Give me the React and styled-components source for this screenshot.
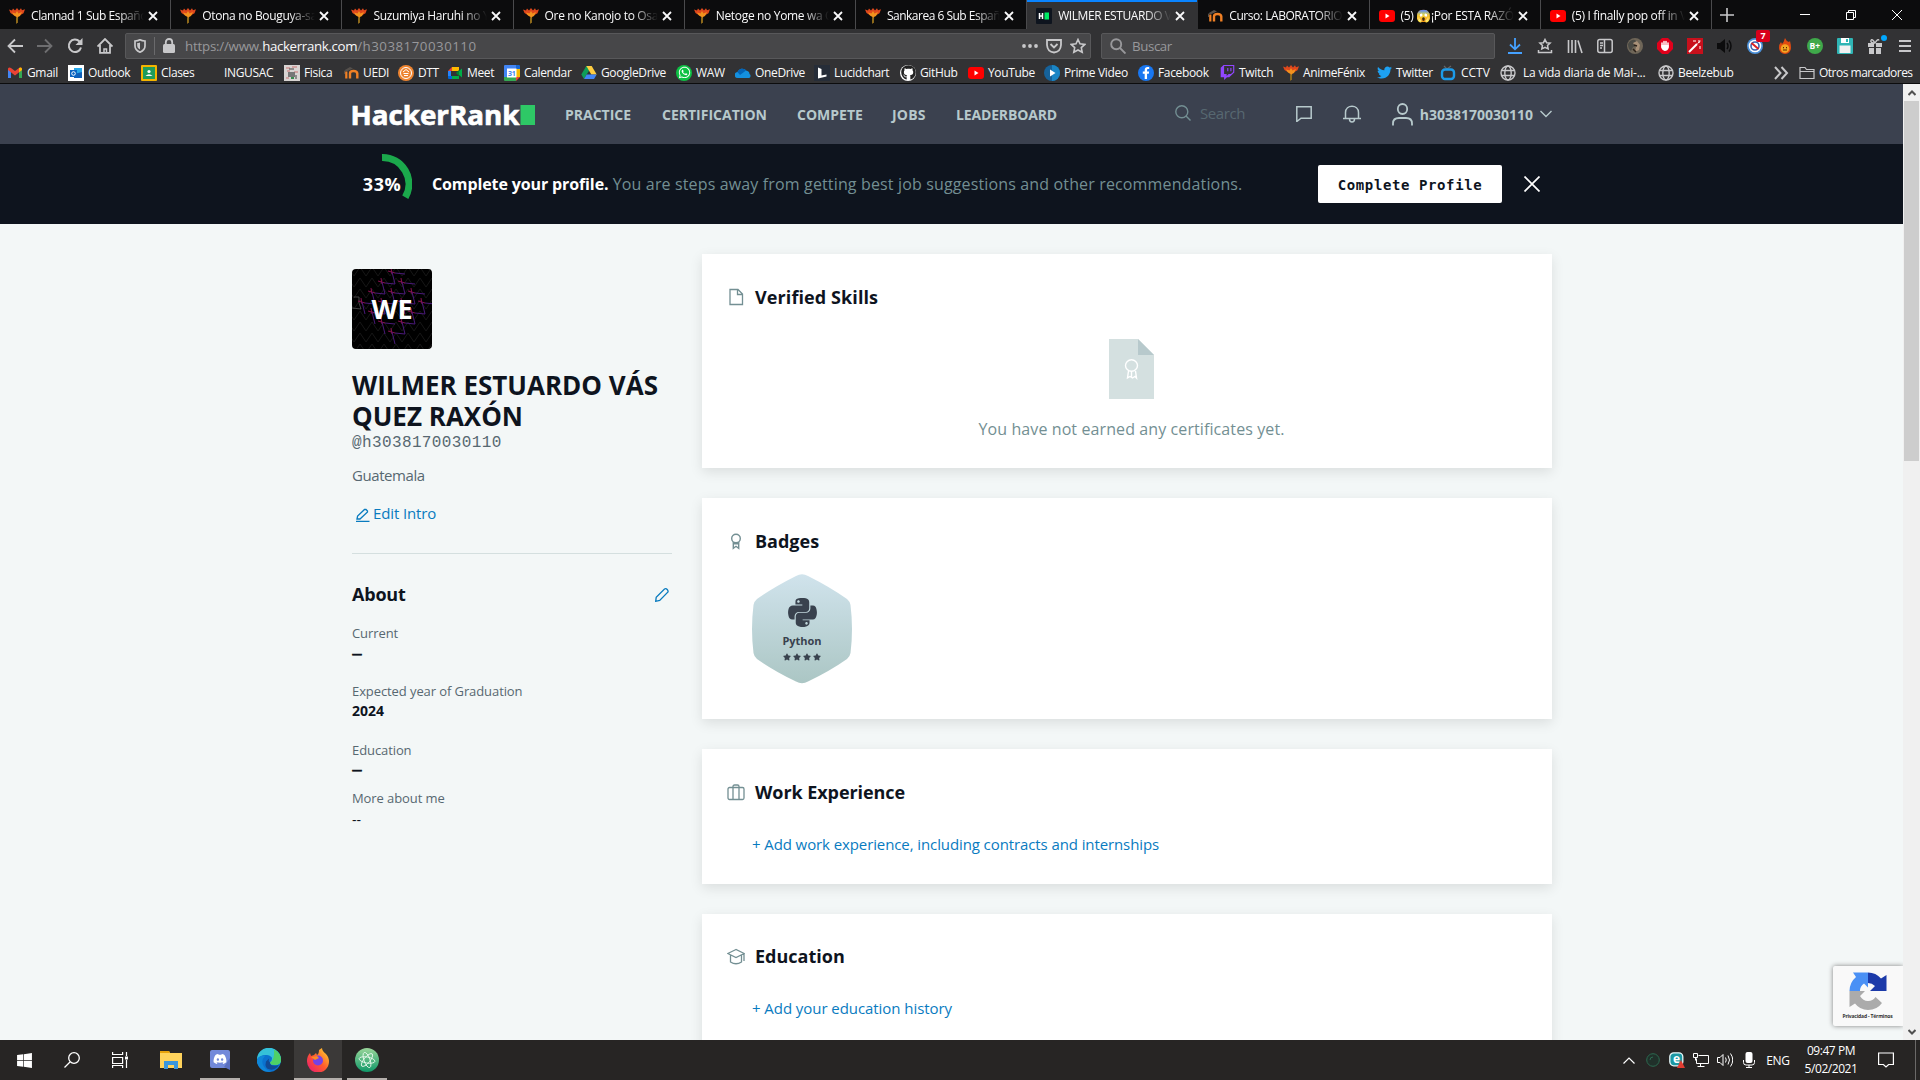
import React from "react";
import styled, { createGlobalStyle, css } from "styled-components";
import {
  FaPython, FaWhatsapp, FaGithub, FaTwitch, FaTwitter, FaFacebookF, FaDiscord, FaWindows, FaStar,
} from "react-icons/fa";

const UI = `"Open Sans", "Noto Sans", sans-serif`;

const Global = createGlobalStyle`
  * { box-sizing: border-box; }
  html, body { margin: 0; padding: 0; overflow: hidden; background: #f3f7f7; }
  body { font-family: ${UI}; }
  h1, h2, p { margin: 0; }
  svg { display: block; flex: none; }
  button, a { font: inherit; text-decoration: none; }
`;

const Screen = styled.div`
  width: 1920px;
  height: 1080px;
  display: flex;
  flex-direction: column;
  overflow: hidden;
`;

/* ---------- browser chrome ---------- */

const TabStrip = styled.div`
  height: 29px;
  flex: none;
  display: flex;
  background: #0c0c0d;
  color: #f9f9fa;
`;

const Tab = styled.div`
  width: 171.2px;
  height: 29px;
  flex: none;
  display: flex;
  align-items: center;
  padding: 2px 12px 0 9px;
  border-right: 1px solid ${(p) => (p.$active ? "transparent" : "#4a4a4c")};
  ${(p) => p.$active && css`
    background: #323234;
    box-shadow: inset 0 2px 0 #0a84ff;
  `}
`;

const TabTitle = styled.div`
  flex: 1;
  margin: 0 4px 0 6px;
  overflow: hidden;
  white-space: nowrap;
  font-size: 12px;
  line-height: 18px;
  letter-spacing: ${(p) => p.$ls ?? -0.33}px;
  mask-image: linear-gradient(to right, #000 calc(100% - 26px), transparent);
`;

const NewTab = styled.div`
  width: 30px;
  display: flex;
  align-items: center;
  justify-content: center;
`;

const WindowButtons = styled.div`
  margin-left: auto;
  display: flex;
  align-items: center;
  width: 138px;
`;

const WindowButton = styled.div`
  width: 46px;
  display: flex;
  justify-content: center;
`;

const Toolbar = styled.div`
  height: 33px;
  flex: none;
  display: flex;
  align-items: center;
  background: #323234;
`;

const NavButton = styled.div`
  width: 30px;
  display: flex;
  justify-content: center;
  opacity: ${(p) => (p.$dim ? 0.4 : 1)};
`;

const Field = styled.div`
  width: ${(p) => p.$w}px;
  height: 26px;
  flex: none;
  display: flex;
  align-items: center;
  gap: 8px;
  background: #474749;
  border: 1px solid #58585a;
  border-radius: 2px;
  padding: 0 4px 0 8px;
  margin-left: ${(p) => p.$ml}px;
`;

const FieldRule = styled.div`
  width: 1px;
  height: 18px;
  background: #6a6a6c;
`;

const Url = styled.div`
  flex: 1;
  margin-left: 2px;
  font-size: 13.3px;
  line-height: 20px;
  color: #98989b;
  letter-spacing: -0.22px;
  white-space: nowrap;
`;

const Host = styled.span`
  color: #f9f9fa;
  letter-spacing: -0.35px;
`;

const UrlPath = styled.span`
  letter-spacing: 0.5px;
`;

const SearchHint = styled.div`
  margin-left: -2px;
  font-size: 13.3px;
  line-height: 20px;
  color: #98989b;
  letter-spacing: -0.4px;
`;

const Extensions = styled.div`
  display: flex;
  align-items: center;
  margin-left: 5px;
`;

const Extension = styled.div`
  width: 30px;
  height: 26px;
  display: flex;
  align-items: center;
  justify-content: center;
  position: relative;
`;

const CountBadge = styled.span`
  position: absolute;
  left: 16px;
  top: -3px;
  width: 14px;
  height: 12px;
  border-radius: 2px;
  background: #d9001b;
  color: #fff;
  font-size: 9px;
  font-weight: 700;
  line-height: 12px;
  text-align: center;
`;

const BlueDot = styled.span`
  position: absolute;
  right: 3px;
  top: 2px;
  width: 6px;
  height: 6px;
  border-radius: 50%;
  background: #00a8ff;
`;

const Bookmarks = styled.div`
  height: 22px;
  flex: none;
  display: flex;
  align-items: center;
  padding-left: 7px;
  background: #323234;
  border-bottom: 1px solid #0c0c0d;
`;

const Bookmark = styled.div`
  width: ${(p) => p.$w}px;
  flex: none;
  display: flex;
  align-items: center;
  gap: ${(p) => p.$gap ?? 4}px;
  color: #f9f9fa;
  font-size: 12px;
  line-height: 16px;
  letter-spacing: ${(p) => p.$ls ?? -0.35}px;
  white-space: nowrap;
`;

const Glyph = styled.span`
  width: 16px;
  height: 16px;
  flex: none;
  display: flex;
  align-items: center;
  justify-content: center;
  border-radius: ${(p) => p.$r || 0};
  background: ${(p) => p.$bg || "transparent"};
  color: ${(p) => p.$c || "#fff"};
`;

/* ---------- site ---------- */

const Viewport = styled.div`
  height: 956px;
  flex: none;
  display: flex;
`;

const Site = styled.div`
  width: 1903px;
  height: 956px;
  position: relative;
  overflow: hidden;
  background: #f3f7f7;
`;

const Scrollbar = styled.div`
  width: 17px;
  background: #f0f0f0;
  display: flex;
  flex-direction: column;
  align-items: center;
  justify-content: space-between;
`;

const ScrollArrow = styled.div`
  height: 17px;
  display: flex;
  align-items: center;
`;

const Thumb = styled.div`
  width: 15px;
  height: 360px;
  background: #cdcdcd;
  margin-bottom: auto;
`;

const SiteHeader = styled.header`
  height: 60px;
  padding: 0 351px 0 352px;
  background: #3b414f;
  display: flex;
  align-items: center;
`;

const Logo = styled.div`
  width: 183px;
  margin-top: 1px;
`;

const NavLinks = styled.nav`
  display: flex;
  gap: 30px;
  margin: 2px 0 0 30px;
`;

const NavLink = styled.a`
  width: ${(p) => p.$w}px;
  color: #b7c9cc;
  font-size: 14px;
  line-height: 20px;
  font-weight: 700;
  letter-spacing: ${(p) => p.$ls || 0}px;
  white-space: nowrap;
`;

const SearchBox = styled.div`
  width: 102px;
  margin-left: 118px;
  display: flex;
  align-items: center;
  gap: 9px;
  color: #576871;
  font-size: 15px;
  line-height: 20px;
  letter-spacing: -0.4px;
  margin-top: -2px;
`;

const HeaderIcons = styled.div`
  display: flex;
  align-items: center;
  gap: 31px;
  margin-left: 19px;
`;

const Account = styled.div`
  display: flex;
  align-items: center;
  gap: 7px;
  color: #b7c9cc;
  font-size: 14px;
  line-height: 20px;
  font-weight: 700;
`;

const AccountName = styled.span`
  margin-top: 2px;
`;

const Banner = styled.section`
  height: 80px;
  padding: 0 351px 0 352px;
  background: #0e141e;
  display: flex;
  align-items: center;
`;

const Progress = styled.div`
  width: 60px;
  height: 60px;
  position: relative;
  display: flex;
  align-items: center;
  justify-content: center;
  color: #fff;
  font-size: 18px;
  font-weight: 700;
  letter-spacing: 0.5px;
`;

const ProgressArc = styled.svg`
  position: absolute;
  left: 0;
  top: 0;
`;

const BannerText = styled.p`
  width: 886px;
  margin-left: 20px;
  font-size: 16px;
  line-height: 24px;
  color: #738f93;
  white-space: nowrap;
  letter-spacing: 0.145px;
`;

const BannerLead = styled.strong`
  color: #fff;
  font-weight: 700;
  letter-spacing: -0.12px;
`;

const CompleteButton = styled.button`
  width: 184px;
  height: 38px;
  border: 0;
  border-radius: 2px;
  padding: 2px 0 0;
  background: #fff;
  color: #0e141e;
  font-family: "DejaVu Sans Mono", monospace;
  font-size: 14px;
  font-weight: 700;
  letter-spacing: 0.6px;
`;

const CloseBanner = styled.div`
  margin-left: 22px;
`;

const Main = styled.main`
  display: flex;
  padding: 30px 351px 0 352px;
`;

const Profile = styled.aside`
  width: 320px;
  margin: 15px 30px 0 0;
  flex: none;
`;

const Avatar = styled.div`
  width: 80px;
  height: 80px;
  border-radius: 4px;
  background: #000;
  position: relative;
  overflow: hidden;
  display: flex;
  align-items: center;
  justify-content: center;
  padding-bottom: 2px;
`;

const Initials = styled.span`
  position: relative;
  color: #fff;
  font-size: 27px;
  font-weight: 700;
`;

const AvatarPattern = styled.svg`
  position: absolute;
  left: 0;
  top: 0;
`;

const Name = styled.h1`
  margin-top: 21px;
  font-size: 26px;
  line-height: 31px;
  font-weight: 700;
  color: #0e141e;
  white-space: nowrap;
`;

const Handle = styled.p`
  margin-top: 1px;
  font-family: "Liberation Mono", monospace;
  font-size: 16px;
  line-height: 20px;
  letter-spacing: 0.38px;
  color: #576871;
`;

const Country = styled.p`
  margin-top: 12px;
  font-size: 15px;
  line-height: 20px;
  letter-spacing: -0.42px;
  color: #576871;
`;

const EditIntro = styled.a`
  display: flex;
  align-items: center;
  gap: 3px;
  margin: 18px 0 0 4px;
  font-size: 15px;
  line-height: 20px;
  letter-spacing: -0.12px;
  color: #097bbf;

  svg { margin-top: 3px; }
`;

const Divider = styled.div`
  height: 1px;
  margin-top: 30px;
  background: #d4dfdf;
`;

const AboutHeading = styled.div`
  display: flex;
  justify-content: space-between;
  align-items: center;
  margin-top: 28px;
  padding-right: 3px;

  svg { margin-top: 2px; }
`;

const AboutTitle = styled.h2`
  font-size: 18px;
  line-height: 24px;
  font-weight: 700;
  color: #0e141e;
  letter-spacing: -0.2px;
`;

const Fact = styled.div`
  margin-top: ${(p) => p.$mt}px;
`;

const FactLabel = styled.p`
  font-size: 13px;
  line-height: 20px;
  color: #576871;
  letter-spacing: -0.09px;
`;

const FactValue = styled.p`
  font-size: 14px;
  line-height: 20px;
  font-weight: ${(p) => (p.$plain ? 400 : 700)};
  color: #0e141e;
  padding-top: ${(p) => p.$pt || 0}px;
`;

const FactBlank = styled.p`
  height: 20px;
  font-size: 10px;
  line-height: ${(p) => p.$lh || 20}px;
  font-weight: 700;
  color: #0e141e;
  -webkit-text-stroke: 0.7px #0e141e;
`;

const Cards = styled.div`
  width: 850px;
  flex: none;
  display: flex;
  flex-direction: column;
  gap: 30px;
`;

const Card = styled.section`
  height: ${(p) => p.$h}px;
  padding: ${(p) => p.$pt || 30}px 25px 0;
  background: #fff;
  box-shadow: 0 4px 12px rgba(0, 0, 0, 0.1);
`;

const CardHeading = styled.div`
  display: flex;
  align-items: center;
  gap: 10px;
`;

const CardTitle = styled.h2`
  font-size: 18px;
  line-height: 26px;
  font-weight: 700;
  color: #0e141e;
  letter-spacing: ${(p) => p.$ls || 0}px;
`;

const Empty = styled.div`
  display: flex;
  flex-direction: column;
  align-items: center;
  gap: 19px;
  margin-top: 29px;
  padding-left: 9px;
  font-size: 16px;
  line-height: 22px;
  letter-spacing: 0.1px;
  color: #738f93;
`;

const AddLink = styled.a`
  display: block;
  margin: 27px 0 0 25px;
  font-size: 15px;
  line-height: 24px;
  color: #097bbf;
  letter-spacing: ${(p) => p.$ls || 0}px;
`;

const Badge = styled.div`
  width: 100px;
  height: 110px;
  margin: 20px 0 0 25px;
  position: relative;
  display: flex;
  flex-direction: column;
  align-items: center;
  padding-top: 22px;
  color: #39424e;
  font-size: 11px;
  line-height: 16px;
  font-weight: 700;
`;

const BadgeShape = styled.svg`
  position: absolute;
  left: 0;
  top: 0;
`;

const BadgeLogo = styled.div`
  position: relative;
  margin-bottom: 4px;
`;

const BadgeName = styled.span`
  position: relative;
`;

const Stars = styled.div`
  position: relative;
  display: flex;
  gap: 2px;
  margin-top: 4px;
`;

const Captcha = styled.div`
  position: absolute;
  right: 0;
  top: 882px;
  width: 70px;
  height: 60px;
  border-radius: 2px 0 0 2px;
  background: #f9f9f9;
  box-shadow: 0 0 5px gray;
  display: flex;
  flex-direction: column;
  align-items: center;
  padding: 6px 1px 0 0;
  gap: 2px;
  font-size: 5px;
  line-height: 8px;
  font-weight: 700;
  letter-spacing: -0.18px;
  color: #333;
`;

/* ---------- taskbar ---------- */

const Taskbar = styled.footer`
  height: 40px;
  flex: none;
  display: flex;
  background: #272524;
  color: #fff;
`;

const TaskButton = styled.div`
  width: ${(p) => p.$w || 48}px;
  height: 40px;
  margin-right: ${(p) => p.$mr || 0}px;
  display: flex;
  align-items: center;
  justify-content: center;
  background: ${(p) => (p.$active ? "#3b3938" : "transparent")};
  box-shadow: ${(p) => (p.$running ? "inset 0 -2px 0 #b4afab" : "none")};
`;

const Tray = styled.div`
  margin-left: auto;
  display: flex;
  align-items: center;
`;

const TrayItem = styled.div`
  width: ${(p) => p.$w}px;
  display: flex;
  justify-content: center;
  font-size: 12px;
  letter-spacing: -0.3px;
`;

const Clock = styled.div`
  width: 72px;
  text-align: center;
  font-size: 12px;
  line-height: 18px;
  letter-spacing: -0.45px;
  white-space: nowrap;
`;

const ShowDesktop = styled.div`
  width: 5px;
  height: 40px;
  border-left: 1px solid #6b6968;
`;

/* ---------- drawings ---------- */

const Svg = ({ s = 16, w, h, vb = "0 0 16 16", children, ...r }) => (
  <svg width={w || s} height={h || s} viewBox={vb} fill="none" {...r}>{children}</svg>
);

const Phoenix = () => (
  <Svg>
    <path d="M0 1.500l3 1L4 .500l2 2L8 0l2 2.500L12 .300l1 2 3-1-1.500 4-3.500 2H5L1.500 5z" fill="#e0481c" />
    <path d="M3 4.500l3.500 1L8 3l1.500 2.500L13 4l-2 4-2 1-.5 6H7L7.500 9 5 7.500z" fill="#f2921e" />
    <path d="M7.200 9.500h2L8.800 14.500 7 16z" fill="#8a6a1c" />
  </Svg>
);
const Moodle = () => (
  <Svg>
    <path d="M1 5.500L7 2l3 1.500-6 2.700z" fill="#55504c" />
    <path d="M1.500 6v3" stroke="#55504c" />
    <path d="M3.300 13.500V6.500" stroke="#f08025" strokeWidth="2.200" />
    <path d="M7 13.500V8.500q0-2.500 3.500-2.500t3.800 2.500v5" stroke="#f08025" strokeWidth="2.400" />
  </Svg>
);
const YouTube = () => (
  <Svg><rect y="2" width="16" height="12" rx="3" fill="#f00" /><path d="M6.500 5.500v5l4-2.500z" fill="#fff" /></Svg>
);
const HrFav = () => (
  <Svg><rect width="16" height="16" rx="1" fill="#0e141e" /><path d="M3.500 5v6M6.500 5v6M3.500 8h3" stroke="#fff" strokeWidth="1.500" /><path d="M8.500 4.500H13v7H8.500z" fill="#00ea64" /></Svg>
);
const TabClose = () => (
  <Svg s={10} vb="0 0 10 10"><path d="M1 1l8 8M9 1l-8 8" stroke="#f9f9fa" strokeWidth="1.800" /></Svg>
);
const Globe = () => (
  <Svg stroke="#c8c8ca" strokeWidth="1.400"><circle cx="8" cy="8" r="7" /><ellipse cx="8" cy="8" rx="3.200" ry="7" /><path d="M1.500 5.500h13M1.500 10.500h13" /></Svg>
);
const Gmail = () => (
  <Svg><path d="M1 13V4l3 2v7z" fill="#4285f4" /><path d="M12 13V6l3-2v9z" fill="#34a853" /><path d="M1 3.500Q2 2 4 3l4 3 4-3q2-1 3 .5V5l-7 5.500L1 5z" fill="#ea4335" /><path d="M12 3q2-1 3 .5V5l-3 2.300z" fill="#fbbc04" /></Svg>
);
const Outlook = () => (
  <Svg><rect width="16" height="16" fill="#fff" /><path d="M6 3h8v9H6z" fill="#28a8ea" /><path d="M6 9l8-2v6H6z" fill="#0f5fb8" /><rect x="2" y="5" width="7" height="7" fill="#0a64c2" /><circle cx="5.500" cy="8.500" r="1.800" stroke="#fff" /></Svg>
);
const Classroom = () => (
  <Svg><rect width="16" height="16" rx="1" fill="#f4b400" /><rect x="2" y="2" width="12" height="12" fill="#1e9c5c" /><circle cx="8" cy="6.500" r="1.600" fill="#fff" /><path d="M4.500 11q3.500-3.500 7 0z" fill="#fff" /></Svg>
);
const Fisica = () => (
  <Svg><rect width="16" height="16" fill="#d8d4d2" /><path d="M2 3h4M8 2h5M3 6h3M10 7h4M2 13h3" stroke="#c97070" /><path d="M4 7h7v5H4z" fill="#777" /><path d="M5 4h5M12 10v4" stroke="#444" /><path d="M7 13h3" stroke="#3a8a50" strokeWidth="2" /></Svg>
);
const Dtt = () => (
  <Svg><circle cx="8" cy="8" r="8" fill="#ee8430" /><circle cx="8" cy="8" r="5.500" stroke="#fff" /><path d="M5 7l3-2.500L11 7M5.500 8.500h5M6 10.500h4" stroke="#fff" /></Svg>
);
const Meet = () => (
  <Svg><path d="M1 6l4-4v4z" fill="#ea4335" /><path d="M1 6h3v6H1z" fill="#2684fc" /><path d="M5 2h7v4H5z" fill="#ffba00" /><path d="M1 11h4v3H2q-1 0-1-1z" fill="#0066da" /><path d="M5 11h7v3H5zM12 6l3-2.500v9L12 10z" fill="#00ac47" /><path d="M9 8l3-3v6z" fill="#00832d" /></Svg>
);
const CalendarIcon = () => (
  <Svg><path d="M0 1q0-1 1-1h11v4H0z" fill="#4285f4" /><path d="M12 0h3q1 0 1 1v3h-4z" fill="#1967d2" /><path d="M0 4h4v8H0z" fill="#4285f4" /><path d="M12 4h4v8h-4z" fill="#fbbc04" /><path d="M0 12h12v4H1q-1 0-1-1z" fill="#34a853" /><path d="M12 12h4l-4 4z" fill="#ea4335" /><path d="M3 3.500h9.500v9H3z" fill="#fff" /><text x="7.800" y="10.700" fontSize="7" fontWeight="700" textAnchor="middle" fill="#4285f4" letterSpacing="-.3">31</text></Svg>
);
const Drive = () => (
  <Svg><path d="M5.300 1h5.400L8 5.700 3 14 .3 9.500z" fill="#0f9d58" /><path d="M5.300 1h5.400l5 8.500h-5.400z" fill="#ffcd40" /><path d="M3 14l2.700-4.500h10L13 14z" fill="#4285f4" /></Svg>
);
const OneDriveIcon = () => (
  <Svg><path d="M3 13a3 3 0 0 1-.5-6A5 5 0 0 1 11 5.500q3.500.5 3.500 3.500a2.200 2.200 0 0 1-.5 4z" fill="#1490df" /><path d="M2.500 7A5 5 0 0 1 11 5.500L5 10z" fill="#0364b8" /></Svg>
);
const Lucid = () => (
  <Svg><rect width="16" height="16" fill="#262d38" /><path d="M4 2.500L7.500 4v6.500l5-1v2L4 13.500z" fill="#fff" /></Svg>
);
const Prime = () => (
  <Svg><circle cx="8" cy="8" r="8" fill="#16629a" /><path d="M8 0a8 8 0 0 1 0 16z" fill="#1a85c5" /><path d="M6 4.500v7L11.500 8z" fill="#fff" /></Svg>
);
const Cctv = () => (
  <Svg stroke="#1c9be8" strokeWidth="2.400"><path d="M4 1l3 3 4-3" strokeWidth="1.200" stroke="#666" /><rect x="2" y="4.500" width="12" height="9.500" rx="3" /></Svg>
);
const Folder = () => (
  <Svg stroke="#c8c8ca" strokeWidth="1.200"><path d="M1 13.500v-11h5l1.500 2H15v9zM1 6.500h14" /></Svg>
);

const RibbonPath = () => (
  <><circle cx="8" cy="5.500" r="4.300" /><path d="M5.300 9v6.300L8 13.300l2.700 2V9M5.300 10.800h5.400" /></>
);

const Hexagon = () => (
  <BadgeShape width="100" height="110" viewBox="0 0 100 110">
    <defs><linearGradient id="hex" x1="0" y1="0" x2="0" y2="1"><stop offset="0" stopColor="#d0e3ec" /><stop offset="1" stopColor="#abc6c4" /></linearGradient></defs>
    <path d="M44 2Q50-1.500 56 2Q78 13 95 25Q98 27.500 98.500 31Q101.500 55 98.500 79Q98 82.500 95 85Q78 97 56 107.500Q50 111 44 107.500Q22 97 5 85Q2 82.500 1.500 79Q-1.500 55 1.500 31Q2 27.500 5 25Q22 13 44 2Z" fill="url(#hex)" />
  </BadgeShape>
);

const crosses = [[40, 3], [30, 13], [50, 13], [20, 23], [40, 23], [60, 23], [10, 33], [30, 33], [50, 33], [70, 33], [20, 43], [60, 43], [30, 53], [50, 53], [40, 63]];

const Pattern = () => (
  <AvatarPattern width="80" height="80" viewBox="0 0 80 80" fill="none">
    {Array.from({ length: 8 }, (_, r) => (
      <path key={r} d={"M-4 " + (r * 11 - 2) + " l6 9 6-9".repeat(7)} stroke="#171717" />
    ))}
    <path d="M2 28h5v6l2 6-9-1" stroke="#555" strokeWidth=".8" />
    {crosses.map(([x, y], i) => (
      <g key={i}>
        <path d={`M${x - 4} ${y - 1}l7 2M${x - 1} ${y - 4}l1 6`} stroke="#8a1050" />
        <path d={`M${x} ${y}l3 12M${x + 3} ${y + 1}l10 1`} stroke="#4a1a7a" />
      </g>
    ))}
  </AvatarPattern>
);

/* ---------- data ---------- */

const tabs = [
  ["Clannad 1 Sub Español", Phoenix, -0.42],
  ["Otona no Bouguya-san", Phoenix],
  ["Suzumiya Haruhi no Yuu", Phoenix],
  ["Ore no Kanojo to Osana", Phoenix],
  ["Netoge no Yome wa Onna", Phoenix],
  ["Sankarea 6 Sub Español", Phoenix, -0.5],
  ["WILMER ESTUARDO VÁS", HrFav, -0.42],
  ["Curso: LABORATORIO D", Moodle, -0.45],
  ["(5) 😱¡Por ESTA RAZÓN", YouTube],
  ["(5) I finally pop off in Va", YouTube],
];

const bookmarks = [
  ["Gmail", 61, <Gmail />],
  ["Outlook", 73, <Outlook />],
  ["Clases", 63, <Classroom />],
  ["INGUSAC", 80, null],
  ["Fisica", 59, <Fisica />],
  ["UEDI", 55, <Moodle />],
  ["DTT", 49, <Dtt />],
  ["Meet", 57, <Meet />],
  ["Calendar", 77, <CalendarIcon />],
  ["GoogleDrive", 95, <Drive />],
  ["WAW", 59, <Glyph $bg="#0cc143" $r="50%"><FaWhatsapp size={13} /></Glyph>],
  ["OneDrive", 79, <OneDriveIcon />],
  ["Lucidchart", 86, <Lucid />],
  ["GitHub", 68, <Glyph $bg="#fff" $r="50%" $c="#222"><FaGithub size={15} /></Glyph>],
  ["YouTube", 76, <YouTube />],
  ["Prime Video", 94, <Prime />],
  ["Facebook", 81, <Glyph $bg="#1877f2" $r="50%"><FaFacebookF size={12} /></Glyph>],
  ["Twitch", 64, <Glyph $c="#9146ff"><FaTwitch size={15} /></Glyph>],
  ["AnimeFénix", 93, <Phoenix />],
  ["Twitter", 64, <Glyph $c="#1da1f2"><FaTwitter size={15} /></Glyph>],
  ["CCTV", 60, <Cctv />, 5, 0],
  ["La vida diaria de Mai-...", 158, <Globe />, 7, -0.22],
  ["Beelzebub", 115, <Globe />],
];

const g = "#c8c8ca";

const Pencil = ({ line }) => (
  <Svg s={14} vb="0 0 14 14" stroke="#097bbf" strokeWidth="1.300">
    {line
      ? <><path d="M1 11l.6-3L8.500 1.500h1.500l1.500 1.500v1L4 11z" /><path d="M0 13.400h13.500" /></>
      : <path d="M.7 13.300l.5-4L9.500 1q1.500-.8 2.700.5T13 4L4.700 12.500z" />}
  </Svg>
);

export default function App() {
  return (
    <Screen>
      <Global />
      <TabStrip>
        {tabs.map(([t, Icon, ls], i) => (
          <Tab key={t} $active={i === 6}><Icon /><TabTitle $ls={ls}>{t}</TabTitle><TabClose /></Tab>
        ))}
        <NewTab><Svg s={14} vb="0 0 14 14"><path d="M7 0v14M0 7h14" stroke={g} strokeWidth="1.600" /></Svg></NewTab>
        <WindowButtons>
          <WindowButton><Svg s={10} vb="0 0 10 10"><path d="M0 4.500h10" stroke="#fff" /></Svg></WindowButton>
          <WindowButton><Svg s={10} vb="0 0 10 10" stroke="#fff"><path d="M.5 2.500h7v7h-7zM2.500 2.500v-2h7v7h-2" /></Svg></WindowButton>
          <WindowButton><Svg s={10} vb="0 0 10 10"><path d="M0 0l10 10M10 0L0 10" stroke="#fff" /></Svg></WindowButton>
        </WindowButtons>
      </TabStrip>

      <Toolbar>
        <NavButton><Svg stroke={g} strokeWidth="1.800"><path d="M8 1.500L1.500 8 8 14.500M1.500 8H16" /></Svg></NavButton>
        <NavButton $dim><Svg stroke={g} strokeWidth="1.800"><path d="M8 1.500L14.500 8 8 14.500M14.500 8H0" /></Svg></NavButton>
        <NavButton><Svg><path d="M14 9.500a6.200 6.200 0 1 1-1.500-6" stroke={g} strokeWidth="2" /><path d="M15.500 0v7h-7z" fill={g} /></Svg></NavButton>
        <NavButton><Svg stroke={g} strokeWidth="1.800"><path d="M.5 8.500L8 1l7.500 7.500M3 7v7.800h10V7" /><path d="M7 15v-4h2.500v4" strokeWidth="1.500" /></Svg></NavButton>
        <Field $w={966} $ml={5}>
          <Svg w={12} h={14} vb="0 0 12 14"><path d="M1 2q3 0 5-1.200Q8 2 11 2v5q0 4-5 6.200Q1 11 1 7z" stroke={g} strokeWidth="1.700" /><path d="M6 3.500Q4.500 4 3.200 4v3q0 2.200 2.800 3.500z" fill={g} /></Svg>
          <FieldRule />
          <Svg w={12} h={15} vb="0 0 12 15"><rect y="6" width="12" height="9" rx="1.500" fill={g} /><path d="M2.800 7V4.200a3.200 3.200 0 0 1 6.400 0V7" stroke={g} strokeWidth="1.800" /></Svg>
          <Url>https://www.<Host>hackerrank.com</Host><UrlPath>/h3038170030110</UrlPath></Url>
          <Svg><g fill={g}><circle cx="2" cy="8" r="1.900" /><circle cx="8" cy="8" r="1.900" /><circle cx="14" cy="8" r="1.900" /></g></Svg>
          <Svg stroke={g} strokeWidth="1.800"><path d="M1 2h14v5q-.5 7-7 7.500Q1.500 14 1 7z" /><path d="M4.500 6L8 9.500 11.500 6" /></Svg>
          <Svg stroke={g} strokeWidth="1.600"><path d="M8 1.500l2 4.300 4.800.6-3.500 3.200.9 4.700L8 12l-4.200 2.300.9-4.700L1.200 6.400 6 5.800z" /></Svg>
        </Field>
        <Field $w={394} $ml={10}>
          <Svg stroke="#98989b" strokeWidth="1.900"><circle cx="6.200" cy="6.200" r="5" /><path d="M10 10l5.500 5.500" /></Svg>
          <SearchHint>Buscar</SearchHint>
        </Field>
        <Extensions>
          <Extension><Svg stroke="#45a1ff" strokeWidth="1.800"><path d="M8 0v11M3 6.500L8 11.300l5-4.800M1 15h14" /></Svg></Extension>
          <Extension><Svg stroke={g} strokeWidth="1.500"><path d="M8 1.500l1.600 3.200 3.500.4-2.600 2.400.7 3.400L8 9.300l-3.200 1.600.7-3.400L2.900 5.100l3.500-.4zM1.500 12v2.500h13V12" /></Svg></Extension>
          <Extension><Svg stroke={g} strokeWidth="1.600"><path d="M1.500 2v13M5 2v13M8.500 2v13M11 2.500L15 15" /></Svg></Extension>
          <Extension><Svg stroke={g} strokeWidth="1.500"><rect x=".8" y="1.500" width="14.400" height="13" rx="2" /><path d="M7.500 2v12M3 5h3M3 7.500h3M3 10h2" /></Svg></Extension>
          <Extension><Svg><circle cx="8" cy="8" r="8" fill="#6f6658" /><path d="M1 6q3-5 7-4l3 3-2 3-3 1-2 4q-3-2-3-7z" fill="#4a4a45" /><path d="M6 5l4-2 3 4-1 5-4 2 1-5z" fill="#a89078" /><path d="M7 7l3 1M6 11l3 3" stroke="#2a2018" strokeWidth="1.500" /></Svg></Extension>
          <Extension><Svg><path d="M5 0h6l5 5v6l-5 5H5l-5-5V5z" fill="#e0001b" /><path d="M5 9V5M7 8V3.500M9 8V3.500M11 9V5" stroke="#fff" strokeWidth="1.500" strokeLinecap="round" /><path d="M4.300 7h7.400v3q-1 3-4 3-2 0-3.400-3z" fill="#fff" /></Svg></Extension>
          <Extension><Svg><rect width="16" height="16" fill="#c8101c" /><path d="M2 14L10 6" stroke="#fff" strokeWidth="2" /><path d="M6 3h3M12 2v3M13 8v3M10.500 5.500l3-2.500" stroke="#fff" /></Svg></Extension>
          <Extension><Svg><path d="M0 5h3l5-4v14l-5-4H0z" fill="#0c0c0d" /><path d="M10 5q2 3 0 6M12 2.500q4 5.500 0 11" stroke="#0c0c0d" strokeWidth="1.500" /></Svg></Extension>
          <Extension><Svg><circle cx="8" cy="8" r="8" fill="#4a90d9" /><circle cx="8" cy="8" r="6.300" fill="#fff" /><circle cx="8" cy="8" r="4" stroke="#3b62b0" strokeWidth="1.600" /><path d="M4.500 5l7 6" stroke="#d22" strokeWidth="2" /></Svg><CountBadge>7</CountBadge></Extension>
          <Extension><Svg><path d="M8 0q1 3 4 4l1-1q1 4 1 7a6 6 0 0 1-12 0Q2 6 4 4l1 2q2-2 3-6z" fill="#e04a10" /><circle cx="8" cy="10.500" r="4.300" fill="#f5a623" /><path d="M6.500 9v1.300M9.500 9v1.300M6 12h4" stroke="#5a2a00" /></Svg></Extension>
          <Extension><Svg><circle cx="8" cy="8" r="8" fill="#3fa94a" /><text x="7.800" y="11" fontSize="8.500" fontWeight="700" textAnchor="middle" fill="#fff">B+</text></Svg></Extension>
          <Extension><Svg><rect width="16" height="16" rx="1" fill="#2fb5b5" /><path d="M4 0h8v5H4z" fill="#fff" /><path d="M9 1h2v3H9z" fill="#2fb5b5" /><path d="M2.500 7.500h11V15h-11z" fill="#f1f1f1" /></Svg></Extension>
          <Extension><Svg fill={g}><path d="M1 5h6v4H1zM9 5h6v4H9zM2 10h5v6H2zM9 10h5v6H9z" /><path d="M8 5Q3 5 4 2.500T8 5q3-5 4-2.500" stroke={g} strokeWidth="1.400" fill="none" /></Svg><BlueDot /></Extension>
          <Extension><Svg stroke={g} strokeWidth="1.800"><path d="M2 3h12M2 8h12M2 13h12" /></Svg></Extension>
        </Extensions>
      </Toolbar>

      <Bookmarks>
        {bookmarks.map(([t, w, icon, gap, ls]) => (
          <Bookmark key={t} $w={w} $gap={gap} $ls={ls}>{icon || <Glyph />}<span>{t}</span></Bookmark>
        ))}
        <Bookmark $w={26}><Svg stroke={g} strokeWidth="2"><path d="M2 2l5.500 6L2 14M8.500 2L14 8l-5.500 6" /></Svg></Bookmark>
        <Bookmark $w={115} $gap={4} $ls={-0.5}><Folder /><span>Otros marcadores</span></Bookmark>
      </Bookmarks>

      <Viewport>
        <Site>
          <SiteHeader>
            <Logo>
              <svg width="183" height="30" viewBox="0 0 183 30">
                <text x="-1.500" y="25" fontSize="27.500" fontWeight="700" fill="#fff" stroke="#fff" strokeWidth=".7" textLength="169" lengthAdjust="spacingAndGlyphs">HackerRank</text>
                <path d="M168.500 5H183v20h-14.500z" fill="#2ec866" />
              </svg>
            </Logo>
            <NavLinks>
              <NavLink $w={67}>PRACTICE</NavLink>
              <NavLink $w={105}>CERTIFICATION</NavLink>
              <NavLink $w={65}>COMPETE</NavLink>
              <NavLink $w={34} $ls={0.2}>JOBS</NavLink>
              <NavLink $w={101} $ls={-0.15}>LEADERBOARD</NavLink>
            </NavLinks>
            <SearchBox>
              <Svg stroke="#738f93" strokeWidth="1.400"><circle cx="6.800" cy="6.800" r="6" /><path d="M11 11l4.500 4.500" /></Svg>
              <span>Search</span>
            </SearchBox>
            <HeaderIcons>
              <Svg stroke="#b7c9cc" strokeWidth="1.500"><path d="M.8.800h14.400v11.400H5L.8 15.500z" /></Svg>
              <Svg s={18} vb="0 0 18 18" stroke="#b7c9cc" strokeWidth="1.500"><path d="M0 13.500h18M2.500 13.500V7.500C2.500-1 15.500-1 15.500 7.500v6M6.500 14q0 3 2.500 3t2.500-3" /></Svg>
              <Account>
                <Svg w={21} h={23} vb="0 0 21 23" stroke="#b7c9cc" strokeWidth="1.800"><ellipse cx="10.500" cy="6" rx="4.700" ry="5" /><path d="M1 22.500v-2Q1 15 7 15h7q6 0 6 5.500v2" /></Svg>
                <AccountName>h3038170030110</AccountName>
                <Svg w={12} h={8} vb="0 0 12 8" stroke="#b7c9cc" strokeWidth="1.400"><path d="M.5 1L6 6.500 11.500 1" /></Svg>
              </Account>
            </HeaderIcons>
          </SiteHeader>

          <Banner>
            <Progress>
              <ProgressArc width="60" height="60" viewBox="0 0 60 60"><path d="M30 3.500A26.500 26.500 0 0 1 53.300 43.300" fill="none" stroke="#1ba94c" strokeWidth="7" /></ProgressArc>
              33%
            </Progress>
            <BannerText><BannerLead>Complete your profile.</BannerLead> You are steps away from getting best job suggestions and other recommendations.</BannerText>
            <CompleteButton>Complete Profile</CompleteButton>
            <CloseBanner><Svg stroke="#fff" strokeWidth="1.700"><path d="M.5.500l15 15M15.500.500l-15 15" /></Svg></CloseBanner>
          </Banner>

          <Main>
            <Profile>
              <Avatar><Pattern /><Initials>WE</Initials></Avatar>
              <Name>WILMER ESTUARDO VÁS<br />QUEZ RAXÓN</Name>
              <Handle>@h3038170030110</Handle>
              <Country>Guatemala</Country>
              <EditIntro><Pencil line />Edit Intro</EditIntro>
              <Divider />
              <AboutHeading><AboutTitle>About</AboutTitle><Pencil /></AboutHeading>
              <Fact $mt={17}><FactLabel>Current</FactLabel><FactBlank>—</FactBlank></Fact>
              <Fact $mt={18}><FactLabel>Expected year of Graduation</FactLabel><FactValue>2024</FactValue></Fact>
              <Fact $mt={19}><FactLabel>Education</FactLabel><FactBlank $lh={18}>—</FactBlank></Fact>
              <Fact $mt={8}><FactLabel>More about me</FactLabel><FactValue $plain $pt={2}>--</FactValue></Fact>
            </Profile>

            <Cards>
              <Card $h={214}>
                <CardHeading>
                  <Svg w={18} h={18} vb="0 0 18 18" stroke="#738f93" strokeWidth="1.300"><path d="M3 1.500h8l4.500 4.500v10.500h-12.500zM10.500 1.500v5h5" /></Svg>
                  <CardTitle $ls={0.1}>Verified Skills</CardTitle>
                </CardHeading>
                <Empty>
                  <svg width="46" height="60" viewBox="0 0 46 60" fill="none">
                    <path d="M0 0h29l16 16v44H0z" fill="#d4e0e0" /><path d="M29 0l16 16H29z" fill="#b7c9cc" />
                    <g stroke="#fff" strokeWidth="1.400"><ellipse cx="22.500" cy="26.500" rx="6" ry="5.800" /><path d="M19.500 32l-1 7 2.500-1.500 2.500 1.500 2.500-1.500 1.500 1.500-1-7M22.500 32v6" /></g>
                  </svg>
                  <span>You have not earned any certificates yet.</span>
                </Empty>
              </Card>
              <Card $h={221}>
                <CardHeading>
                  <Svg s={18} vb="-1 -1 18 18" stroke="#738f93" strokeWidth="1.400"><RibbonPath /></Svg>
                  <CardTitle>Badges</CardTitle>
                </CardHeading>
                <Badge>
                  <Hexagon />
                  <BadgeLogo><FaPython size={33} /></BadgeLogo>
                  <BadgeName>Python</BadgeName>
                  <Stars><FaStar size={8} /><FaStar size={8} /><FaStar size={8} /><FaStar size={8} /></Stars>
                </Badge>
              </Card>
              <Card $h={135}>
                <CardHeading>
                  <Svg s={18} vb="0 0 18 18" stroke="#738f93" strokeWidth="1.300"><rect x="1" y="4.500" width="16" height="12" rx="1.500" /><path d="M6 16.500v-13q0-1.500 1.500-1.500h3q1.500 0 1.500 1.500v13" /></Svg>
                  <CardTitle $ls={-0.07}>Work Experience</CardTitle>
                </CardHeading>
                <AddLink $ls={-0.1}>+ Add work experience, including contracts and internships</AddLink>
              </Card>
              <Card $h={170} $pt={29}>
                <CardHeading>
                  <Svg s={18} vb="0 0 18 18" stroke="#738f93" strokeWidth="1.300"><path d="M9 2.500L.8 6.500 9 10.500l8.200-4zM3.500 8v7q5.500 3.500 11 0V8M17 7v7" /></Svg>
                  <CardTitle>Education</CardTitle>
                </CardHeading>
                <AddLink $ls={-0.06}>+ Add your education history</AddLink>
              </Card>
            </Cards>
          </Main>

          <Captcha>
            <svg width="38" height="38" viewBox="0 0 38 38" fill="none">
              <path d="M.5 19A18.500 18.500 0 0 1 7 5L4 .5h15v15l-4-4Q11 14 11 19z" fill="#4a90f5" />
              <path d="M19 .5q8 0 13 6l5.500-3.500V19H21l5-5q-3-3-7-3z" fill="#1c3aa9" />
              <path d="M.5 19H16l-5 5q3 5 8 5 5 0 7.500-4L33 31q-5 7-14 7-8 0-13-6.500L.5 35z" fill="#ababab" />
            </svg>
            <span>Privacidad - Términos</span>
          </Captcha>
        </Site>
        <Scrollbar>
          <ScrollArrow><Svg s={8} vb="0 0 8 8" stroke="#505050" strokeWidth="2"><path d="M.5 6L4 2.500 7.500 6" /></Svg></ScrollArrow>
          <Thumb />
          <ScrollArrow><Svg s={8} vb="0 0 8 8" stroke="#505050" strokeWidth="2"><path d="M.5 2L4 5.500 7.500 2" /></Svg></ScrollArrow>
        </Scrollbar>
      </Viewport>

      <Taskbar>
        <TaskButton><FaWindows size={17} /></TaskButton>
        <TaskButton><Svg stroke="#fff" strokeWidth="1.300"><circle cx="10" cy="6" r="5.300" /><path d="M6 10l-5.500 5.500" /></Svg></TaskButton>
        <TaskButton><Svg stroke="#fff" strokeWidth="1.200"><path d="M.6 5.500h10v6H.6zM.6 0v2.500h10V0M.6 16v-2.500h10V16M14.500 0v4M14.500 8v8" /><path d="M13 4.500h3v3h-3z" fill="#fff" stroke="none" /></Svg></TaskButton>
        <TaskButton $w={54} $mr={2}>
          <Svg w={22} h={18} vb="0 0 22 18"><path d="M0 0h9l1 2h12v15H0z" fill="#ffd35c" /><path d="M0 0h9l1 2H0z" fill="#e8a30c" /><path d="M4 18v-8h14v8h-4v-4H8v4z" fill="#3a96dd" /></Svg>
        </TaskButton>
        <TaskButton $w={40} $running $mr={5}><Svg s={20} vb="0 0 20 20"><rect width="20" height="18" rx="2" fill="#7289da" /><path d="M14 17l6 3V8z" fill="#5a6fc0" /><g color="#fff" transform="translate(3 2)"><FaDiscord size={14} /></g></Svg></TaskButton>
        <TaskButton $mr={1}>
          <Svg s={24} vb="0 0 24 24">
            <circle cx="12" cy="12" r="12" fill="#0b72cf" />
            <path d="M0 11.500A12 12 0 0 1 24 12q0 5-6 5-5 0-5-2.500 2-1.500 2-4T10 7Q3 6.500 0 11.500z" fill="#35c1d8" />
            <path d="M17 1.500A12 12 0 0 1 24 12q0 5-6 5-5 0-5-2.500 5-3 4-13z" fill="#4fd165" />
            <path d="M0 12q2-5 8-4-4 4-2 9t8 6.500Q4 25 0 15z" fill="#0f86d8" />
            <path d="M13 14.500q0 4 7 3l2-1q-3 6-9 5t-4-8l3-3q-1 2 1 4z" fill="#124a94" />
          </Svg>
        </TaskButton>
        <TaskButton $active $running $mr={5}>
          <Svg s={24} vb="0 0 24 24">
            <defs><linearGradient id="fx" x1="0" y1="1" x2="1" y2="0"><stop offset="0" stopColor="#e6137a" /><stop offset=".5" stopColor="#ff5a2c" /><stop offset="1" stopColor="#ffe22e" /></linearGradient></defs>
            <path d="M1 13q0-5 3-8l1 3 3-1 2-2 1 2q2-1 2-5l3-2q0 3 4 6 3 3 3 8a11 11 0 0 1-22-1z" fill="url(#fx)" />
            <circle cx="12" cy="12.500" r="5" fill="#7542e5" /><path d="M5 9l6-1 2 2-4 2z" fill="#ff8a20" />
          </Svg>
        </TaskButton>
        <TaskButton $w={40} $running>
          <Svg s={24} vb="0 0 24 24"><defs><linearGradient id="atom" x1="0" y1="0" x2="0" y2="1"><stop offset="0" stopColor="#9ad69a" /><stop offset="1" stopColor="#109868" /></linearGradient></defs><circle cx="12" cy="12" r="12" fill="url(#atom)" /><g stroke="#e4f6ea" strokeWidth=".9"><ellipse cx="12" cy="12" rx="8" ry="3" transform="rotate(10 12 12)" /><ellipse cx="12" cy="12" rx="8" ry="3" transform="rotate(70 12 12)" /><ellipse cx="12" cy="12" rx="8" ry="3" transform="rotate(130 12 12)" /></g></Svg>
        </TaskButton>
        <Tray>
          <TrayItem $w={24}><Svg w={12} h={7} vb="0 0 12 7" stroke="#fff" strokeWidth="1.200"><path d="M.5 6.500L6 1l5.500 5.500" /></Svg></TrayItem>
          <TrayItem $w={24}><Svg s={14} vb="0 0 14 14"><circle cx="7" cy="7" r="6.300" fill="#20302a" stroke="#2c6a50" /><path d="M4 7a3 3 0 0 1 3-3" stroke="#2c6a50" /></Svg></TrayItem>
          <TrayItem $w={24}><Svg><rect x=".8" y=".8" width="13" height="13" rx="4" fill="#1b98a3" stroke="#e8f6f7" strokeWidth="1.300" /><text x="7.300" y="11" fontSize="12" fontWeight="700" textAnchor="middle" fill="#fff">e</text><path d="M12 8l4 8H8z" fill="#e03c31" /></Svg></TrayItem>
          <TrayItem $w={24}><Svg stroke="#fff"><path d="M5.500 3.500h10v8H3.500v-5M7.500 11.500v3M4.500 14.500h7M.5 1.500h4v4h-4zM2.500 5.500v3" /></Svg></TrayItem>
          <TrayItem $w={24}><Svg stroke="#fff"><path d="M.5 5.500h2.500l3-3v11l-3-3H.5zM8.500 5.500q1.500 2.500 0 5M11 3.500q3 4.500 0 9M13.500 1.500q4.500 6.500 0 13" /></Svg></TrayItem>
          <TrayItem $w={24}><Svg><rect x="4.500" y="0" width="7" height="11" rx="2" fill="#fff" /><path d="M2.500 8v2.500q0 2.500 2.500 2.500h6q2.500 0 2.500-2.500V8M8 13v3M5 15.500h6" stroke="#fff" /></Svg></TrayItem>
          <TrayItem $w={34}>ENG</TrayItem>
          <Clock>09:47 PM<br />5/02/2021</Clock>
          <TrayItem $w={38}><Svg stroke="#fff" strokeWidth="1.200"><path d="M.6 1h14.800v11.500h-4.800L8 15l-2.600-2.500H.6z" /></Svg></TrayItem>
          <TrayItem $w={10} />
          <ShowDesktop />
        </Tray>
      </Taskbar>
    </Screen>
  );
}
